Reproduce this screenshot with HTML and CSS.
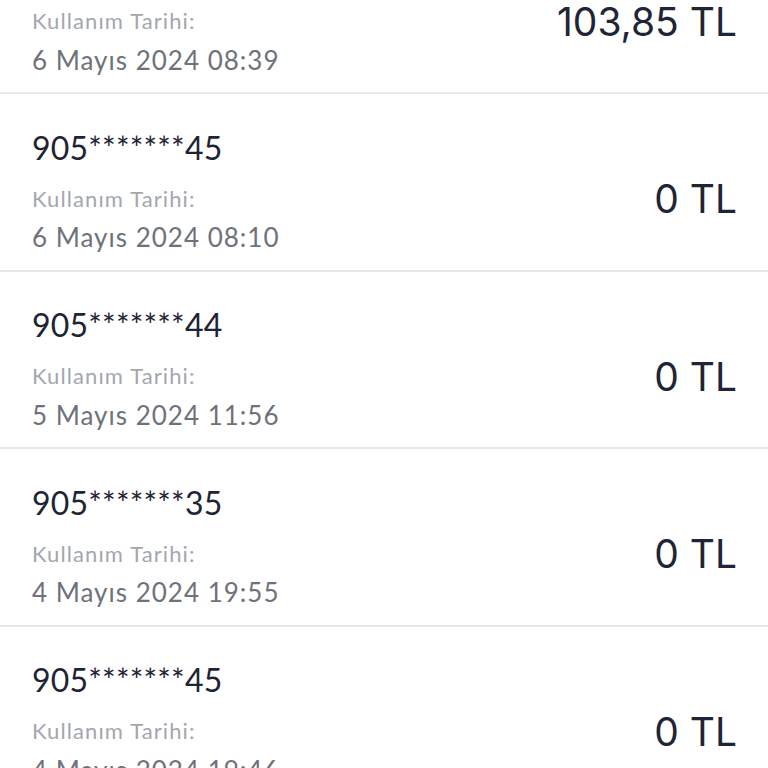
FILE: index.html
```html
<!DOCTYPE html>
<html lang="tr">
<head>
<meta charset="utf-8">
<title>Kullanım Geçmişi</title>
<link rel="stylesheet" href="styles.css">
</head>
<body>
<div class="list">
  <div class="row">
    <div class="info">
      <div class="phone">905*******46</div>
      <div class="label">Kullanım Tarihi:</div>
      <div class="date">6 Mayıs 2024 08:39</div>
    </div>
    <div class="amount">103,85 TL</div>
  </div>
  <div class="row">
    <div class="info">
      <div class="phone">905*******45</div>
      <div class="label">Kullanım Tarihi:</div>
      <div class="date">6 Mayıs 2024 08:10</div>
    </div>
    <div class="amount">0 TL</div>
  </div>
  <div class="row">
    <div class="info">
      <div class="phone">905*******44</div>
      <div class="label">Kullanım Tarihi:</div>
      <div class="date">5 Mayıs 2024 11:56</div>
    </div>
    <div class="amount">0 TL</div>
  </div>
  <div class="row">
    <div class="info">
      <div class="phone">905*******35</div>
      <div class="label">Kullanım Tarihi:</div>
      <div class="date">4 Mayıs 2024 19:55</div>
    </div>
    <div class="amount">0 TL</div>
  </div>
  <div class="row">
    <div class="info">
      <div class="phone">905*******45</div>
      <div class="label">Kullanım Tarihi:</div>
      <div class="date">4 Mayıs 2024 19:46</div>
    </div>
    <div class="amount">0 TL</div>
  </div>
</div>
</body>
</html>
```
FILE: styles.css
```css
html, body {
  margin: 0;
  padding: 0;
  background: #ffffff;
  overflow: hidden;
}
body {
  width: 768px;
  height: 768px;
  font-family: "Lato", "Noto Sans", sans-serif;
}
.list {
  margin-top: -83.5px;
}
.row {
  height: 175.5px;
  border-bottom: 2px solid #e6e7ea;
  padding: 0 31px 0 32px;
  display: flex;
  justify-content: space-between;
  align-items: flex-start;
}
.info {
  display: flex;
  flex-direction: column;
  padding-top: 33.6px;
}
.phone {
  font-size: 32px;
  line-height: 40px;
  letter-spacing: 0.2px;
  color: #1e2433;
}
.label {
  margin-top: 16px;
  font-size: 22px;
  line-height: 30px;
  letter-spacing: 1.1px;
  color: #a3a7ae;
}
.date {
  margin-top: 6.5px;
  font-size: 26px;
  line-height: 34px;
  letter-spacing: 1px;
  color: #6e727a;
}
.amount {
  margin-top: 82.3px;
  font-family: "Inter", "Roboto", sans-serif;
  font-size: 39px;
  line-height: 46px;
  color: #1f2535;
}
```
